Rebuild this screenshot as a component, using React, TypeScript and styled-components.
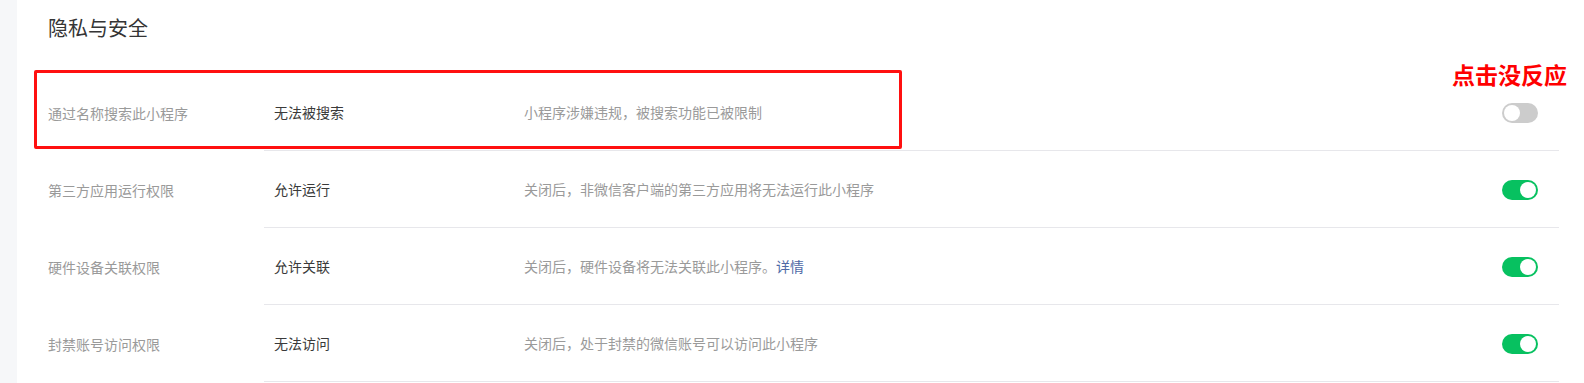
import { FC } from 'react'
import styled, { createGlobalStyle } from 'styled-components'

const Global = createGlobalStyle`
  html, body {
    margin: 0;
    padding: 0;
    background: #fff;
  }
  body {
    font-family: "Noto Sans CJK SC", "Liberation Sans", sans-serif;
  }
`

const Page = styled.div`
  display: flex;
  width: 1584px;
  height: 383px;
  overflow: hidden;
  background: #fff;
`

const Side = styled.div`
  flex: 0 0 17px;
  background: #f6f7f9;
`

const Panel = styled.div`
  position: relative;
  flex: 1;
  padding: 0 25px 0 31px;
`

const Title = styled.h2`
  margin: 0 0 18px;
  height: 56px;
  line-height: 56px;
  font-size: 20px;
  font-weight: 400;
  color: #353535;
`

const List = styled.div`
  display: flex;
  flex-direction: column;
`

const Row = styled.div`
  display: flex;
  height: 77px;
`

const Label = styled.div`
  flex: 0 0 216px;
  display: flex;
  align-items: center;
  font-size: 14px;
  color: #9a9a9a;
`

const Body = styled.div`
  flex: 1;
  display: flex;
  align-items: center;
  padding: 0 21px 0 10px;
  border-bottom: 1px solid #e7e7eb;
`

const Value = styled.div`
  flex: 0 0 250px;
  font-size: 14px;
  color: #3a3a3a;
`

const Desc = styled.div`
  flex: 1;
  font-size: 14px;
  color: #9a9a9a;
`

const Link = styled.a`
  color: #4e6aa6;
  text-decoration: none;
`

const Switch = styled.span<{ $on: boolean }>`
  position: relative;
  flex: 0 0 36px;
  height: 20px;
  border-radius: 10px;
  background: ${p => (p.$on ? '#07c160' : '#cccccc')};
  margin-top: 1px;

  &::after {
    content: '';
    position: absolute;
    top: 2px;
    left: ${p => (p.$on ? '18px' : '2px')};
    width: 16px;
    height: 16px;
    border-radius: 50%;
    background: #fff;
  }
`

const Mark = styled.div`
  position: absolute;
  left: 17px;
  top: 70px;
  width: 862px;
  height: 73px;
  border: 3px solid #ff1010;
  border-radius: 2px;
  pointer-events: none;
`

const Note = styled.div`
  position: absolute;
  right: 17px;
  top: 60px;
  font-size: 23px;
  font-weight: 700;
  color: #ff0000;
  line-height: 28px;
`

type Item = {
  label: string
  value: string
  desc: string
  link?: string
  on: boolean
}

const items: Item[] = [
  { label: '通过名称搜索此小程序', value: '无法被搜索', desc: '小程序涉嫌违规，被搜索功能已被限制', on: false },
  { label: '第三方应用运行权限', value: '允许运行', desc: '关闭后，非微信客户端的第三方应用将无法运行此小程序', on: true },
  { label: '硬件设备关联权限', value: '允许关联', desc: '关闭后，硬件设备将无法关联此小程序。', link: '详情', on: true },
  { label: '封禁账号访问权限', value: '无法访问', desc: '关闭后，处于封禁的微信账号可以访问此小程序', on: true },
]

const App: FC = () => {
  return (
    <>
      <Global />
      <Page>
        <Side />
        <Panel>
          <Title>隐私与安全</Title>
          <List>
            {items.map(it => (
              <Row key={it.label}>
                <Label>{it.label}</Label>
                <Body>
                  <Value>{it.value}</Value>
                  <Desc>
                    {it.desc}
                    {it.link && <Link href="#">{it.link}</Link>}
                  </Desc>
                  <Switch $on={it.on} />
                </Body>
              </Row>
            ))}
          </List>
          <Mark />
          <Note>点击没反应</Note>
        </Panel>
      </Page>
    </>
  )
}

export default App
